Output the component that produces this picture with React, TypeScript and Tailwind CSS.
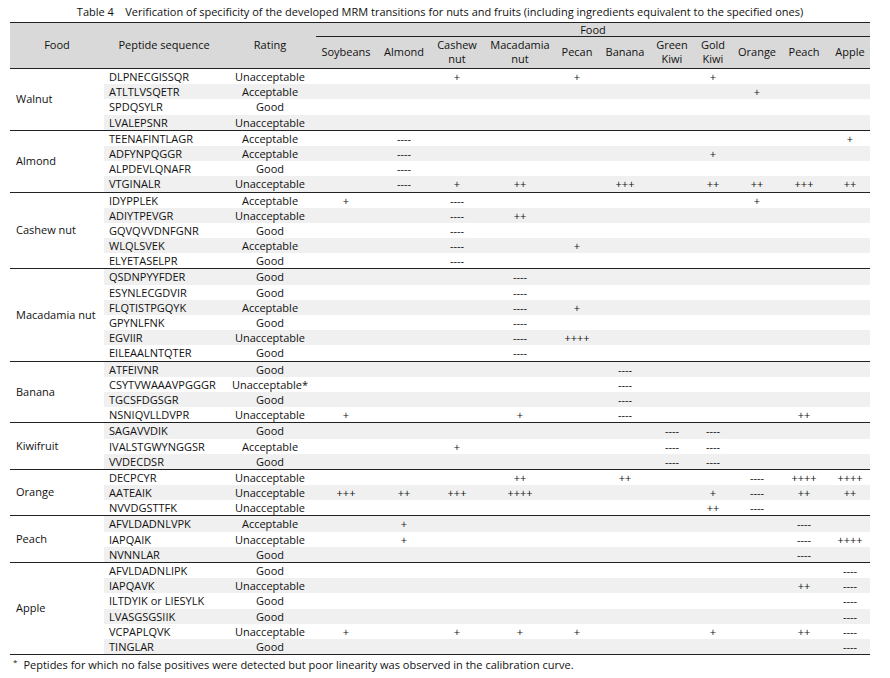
import React from "react";

type Col = { label: string[]; w: string };

const cols: Col[] = [
  { label: ["Soybeans"], w: "w-[60px]" },
  { label: ["Almond"], w: "w-[56px]" },
  { label: ["Cashew", "nut"], w: "w-[50px]" },
  { label: ["Macadamia", "nut"], w: "w-[76px]" },
  { label: ["Pecan"], w: "w-[38px]" },
  { label: ["Banana"], w: "w-[58px]" },
  { label: ["Green", "Kiwi"], w: "w-[36px]" },
  { label: ["Gold", "Kiwi"], w: "w-[46px]" },
  { label: ["Orange"], w: "w-[42px]" },
  { label: ["Peach"], w: "w-[52px]" },
  { label: ["Apple"], w: "w-[40px]" },
];

type Row = { p: string; r: string; v: Record<number, string> };
type Group = { food: string; rows: Row[] };

const D = "----";

const groups: Group[] = [
  {
    food: "Walnut",
    rows: [
      { p: "DLPNECGISSQR", r: "Unacceptable", v: { 2: "+", 4: "+", 7: "+" } },
      { p: "ATLTLVSQETR", r: "Acceptable", v: { 8: "+" } },
      { p: "SPDQSYLR", r: "Good", v: {} },
      { p: "LVALEPSNR", r: "Unacceptable", v: {} },
    ],
  },
  {
    food: "Almond",
    rows: [
      { p: "TEENAFINTLAGR", r: "Acceptable", v: { 1: D, 10: "+" } },
      { p: "ADFYNPQGGR", r: "Acceptable", v: { 1: D, 7: "+" } },
      { p: "ALPDEVLQNAFR", r: "Good", v: { 1: D } },
      {
        p: "VTGINALR",
        r: "Unacceptable",
        v: { 1: D, 2: "+", 3: "++", 5: "+++", 7: "++", 8: "++", 9: "+++", 10: "++" },
      },
    ],
  },
  {
    food: "Cashew nut",
    rows: [
      { p: "IDYPPLEK", r: "Acceptable", v: { 0: "+", 2: D, 8: "+" } },
      { p: "ADIYTPEVGR", r: "Unacceptable", v: { 2: D, 3: "++" } },
      { p: "GQVQVVDNFGNR", r: "Good", v: { 2: D } },
      { p: "WLQLSVEK", r: "Acceptable", v: { 2: D, 4: "+" } },
      { p: "ELYETASELPR", r: "Good", v: { 2: D } },
    ],
  },
  {
    food: "Macadamia nut",
    rows: [
      { p: "QSDNPYYFDER", r: "Good", v: { 3: D } },
      { p: "ESYNLECGDVIR", r: "Good", v: { 3: D } },
      { p: "FLQTISTPGQYK", r: "Acceptable", v: { 3: D, 4: "+" } },
      { p: "GPYNLFNK", r: "Good", v: { 3: D } },
      { p: "EGVIIR", r: "Unacceptable", v: { 3: D, 4: "++++" } },
      { p: "EILEAALNTQTER", r: "Good", v: { 3: D } },
    ],
  },
  {
    food: "Banana",
    rows: [
      { p: "ATFEIVNR", r: "Good", v: { 5: D } },
      { p: "CSYTVWAAAVPGGGR", r: "Unacceptable*", v: { 5: D } },
      { p: "TGCSFDGSGR", r: "Good", v: { 5: D } },
      { p: "NSNIQVLLDVPR", r: "Unacceptable", v: { 0: "+", 3: "+", 5: D, 9: "++" } },
    ],
  },
  {
    food: "Kiwifruit",
    rows: [
      { p: "SAGAVVDIK", r: "Good", v: { 6: D, 7: D } },
      { p: "IVALSTGWYNGGSR", r: "Acceptable", v: { 2: "+", 6: D, 7: D } },
      { p: "VVDECDSR", r: "Good", v: { 6: D, 7: D } },
    ],
  },
  {
    food: "Orange",
    rows: [
      { p: "DECPCYR", r: "Unacceptable", v: { 3: "++", 5: "++", 8: D, 9: "++++", 10: "++++" } },
      {
        p: "AATEAIK",
        r: "Unacceptable",
        v: { 0: "+++", 1: "++", 2: "+++", 3: "++++", 7: "+", 8: D, 9: "++", 10: "++" },
      },
      { p: "NVVDGSTTFK", r: "Unacceptable", v: { 7: "++", 8: D } },
    ],
  },
  {
    food: "Peach",
    rows: [
      { p: "AFVLDADNLVPK", r: "Acceptable", v: { 1: "+", 9: D } },
      { p: "IAPQAIK", r: "Unacceptable", v: { 1: "+", 9: D, 10: "++++" } },
      { p: "NVNNLAR", r: "Good", v: { 9: D } },
    ],
  },
  {
    food: "Apple",
    rows: [
      { p: "AFVLDADNLIPK", r: "Good", v: { 10: D } },
      { p: "IAPQAVK", r: "Unacceptable", v: { 9: "++", 10: D } },
      { p: "ILTDYIK or LIESYLK", r: "Good", v: { 10: D } },
      { p: "LVASGSGSIIK", r: "Good", v: { 10: D } },
      {
        p: "VCPAPLQVK",
        r: "Unacceptable",
        v: { 0: "+", 2: "+", 3: "+", 4: "+", 7: "+", 9: "++", 10: D },
      },
      { p: "TINGLAR", r: "Good", v: { 10: D } },
    ],
  },
];

export default function App() {
  let idx = 0;
  return (
    <div
      className="w-[890px] h-[678px] bg-white text-[#111] text-[11px] overflow-hidden"
      style={{ fontFamily: '"Open Sans", "Noto Sans", sans-serif' }}
    >
      <div className="ml-[10px] w-[860px]">
        <div className="h-[22px] pt-[4px] leading-[16px] text-center whitespace-pre">
          {"Table 4    Verification of specificity of the developed MRM transitions for nuts and fruits (including ingredients equivalent to the specified ones)"}
        </div>

        {/* Header */}
        <div className="flex bg-[#d9d9d9] border-t-[1.5px] border-b-[1.5px] border-[#222] h-[47px]">
          <div className="w-[94px] flex items-center justify-center pb-[1px]">Food</div>
          <div className="w-[120px] flex items-center justify-center pb-[1px]">Peptide sequence</div>
          <div className="w-[92px] flex items-center justify-center pb-[1px]">Rating</div>
          <div className="w-[554px] flex flex-col">
            <div className="h-[14px] leading-[14px] text-center border-b border-[#222]">Food</div>
            <div className="flex flex-1">
              {cols.map((c, i) => (
                <div
                  key={i}
                  className={`${c.w} flex flex-col items-center justify-center leading-[14px] pb-[1px]`}
                >
                  {c.label.map((l, j) => (
                    <span key={j}>{l}</span>
                  ))}
                </div>
              ))}
            </div>
          </div>
        </div>

        {/* Body */}
        {groups.map((g, gi) => (
          <div key={gi} className={`flex ${gi > 0 ? "border-t border-[#222]" : ""}`}>
            <div className="w-[94px] flex items-center pl-[6px] bg-white">{g.food}</div>
            <div className="flex flex-col w-[766px]">
              {g.rows.map((r, ri) => {
                idx += 1;
                const gray = idx % 2 === 0;
                return (
                  <div
                    key={ri}
                    className={`flex h-[15.2px] leading-[15.2px] ${gray ? "bg-[#f0f0f0]" : "bg-white"}`}
                  >
                    <div className="w-[120px] pl-[5px] whitespace-nowrap">{r.p}</div>
                    <div className="w-[92px] text-center whitespace-nowrap">{r.r}</div>
                    {cols.map((c, ci) => (
                      <div key={ci} className={`${c.w} text-center whitespace-nowrap`}>
                        {r.v[ci] ?? ""}
                      </div>
                    ))}
                  </div>
                );
              })}
            </div>
          </div>
        ))}
        <div className="border-t-[1.5px] border-[#222]" />
        <div className="pt-[2px] pl-[3px] leading-[16px] whitespace-nowrap">
          <sup className="text-[8px] mr-[6px]">*</sup>
          Peptides for which no false positives were detected but poor linearity was observed in the calibration curve.
        </div>
      </div>
    </div>
  );
}
